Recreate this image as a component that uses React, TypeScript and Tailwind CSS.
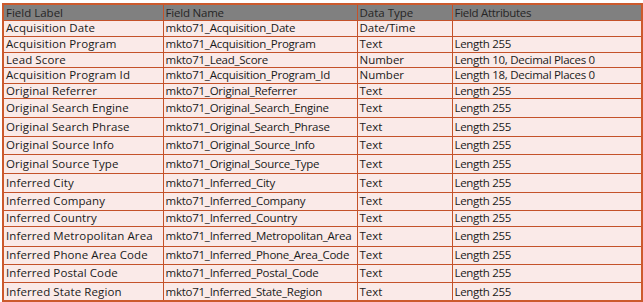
const rows: [string, string, string, string, number][] = [
  ['Acquisition Date', 'mkto71_Acquisition_Date', 'Date/Time', '', 16],
  ['Acquisition Program', 'mkto71_Acquisition_Program', 'Text', 'Length 255', 16],
  ['Lead Score', 'mkto71_Lead_Score', 'Number', 'Length 10, Decimal Places 0', 15],
  ['Acquisition Program Id', 'mkto71_Acquisition_Program_Id', 'Number', 'Length 18, Decimal Places 0', 16],
  ['Original Referrer', 'mkto71_Original_Referrer', 'Text', 'Length 255', 15],
  ['Original Search Engine', 'mkto71_Original_Search_Engine', 'Text', 'Length 255', 19],
  ['Original Search Phrase', 'mkto71_Original_Search_Phrase', 'Text', 'Length 255', 19],
  ['Original Source Info', 'mkto71_Original_Source_Info', 'Text', 'Length 255', 18],
  ['Original Source Type', 'mkto71_Original_Source_Type', 'Text', 'Length 255', 19],
  ['Inferred City', 'mkto71_Inferred_City', 'Text', 'Length 255', 19],
  ['Inferred Company', 'mkto71_Inferred_Company', 'Text', 'Length 255', 18],
  ['Inferred Country', 'mkto71_Inferred_Country', 'Text', 'Length 255', 16],
  ['Inferred Metropolitan Area', 'mkto71_Inferred_Metropolitan_Area', 'Text', 'Length 255', 20],
  ['Inferred Phone Area Code', 'mkto71_Inferred_Phone_Area_Code', 'Text', 'Length 255', 18],
  ['Inferred Postal Code', 'mkto71_Inferred_Postal_Code', 'Text', 'Length 255', 18],
  ['Inferred State Region', 'mkto71_Inferred_State_Region', 'Text', 'Length 255', 19],
]

const cell = 'border border-[#c4522a] pl-[2px] pr-0 py-0 leading-none whitespace-nowrap'

export default function App() {
  return (
    <div className="w-[643px] h-[302px] bg-white pl-[2px] pt-[3px] font-['Open_Sans',sans-serif] text-[11.5px] text-[#1a1a1a]">
      <table className="w-[639px] border-collapse table-fixed border-2 border-[#cc5a2d]">
        <colgroup>
          <col className="w-[160px]" />
          <col className="w-[194px]" />
          <col className="w-[95px]" />
          <col className="w-[190px]" />
        </colgroup>
        <thead>
          <tr className="h-[16px] bg-[#808080] text-[#262626]">
            <th className={`${cell} text-left font-normal`}>Field Label</th>
            <th className={`${cell} text-left font-normal tracking-[-0.2px]`}>Field Name</th>
            <th className={`${cell} text-left font-normal`}>Data Type</th>
            <th className={`${cell} text-left font-normal tracking-[-0.3px]`}>Field Attributes</th>
          </tr>
        </thead>
        <tbody>
          {rows.map(([label, name, type, attrs, h]) => (
            <tr key={name} className="bg-[#faeae8]" style={{ height: h }}>
              <td className={`${cell} tracking-[0.1px]`}>{label}</td>
              <td className={`${cell} tracking-[-0.25px]`}>{name}</td>
              <td className={cell}>{type}</td>
              <td className={`${cell} tracking-[-0.3px]`}>{attrs}</td>
            </tr>
          ))}
        </tbody>
      </table>
    </div>
  )
}
